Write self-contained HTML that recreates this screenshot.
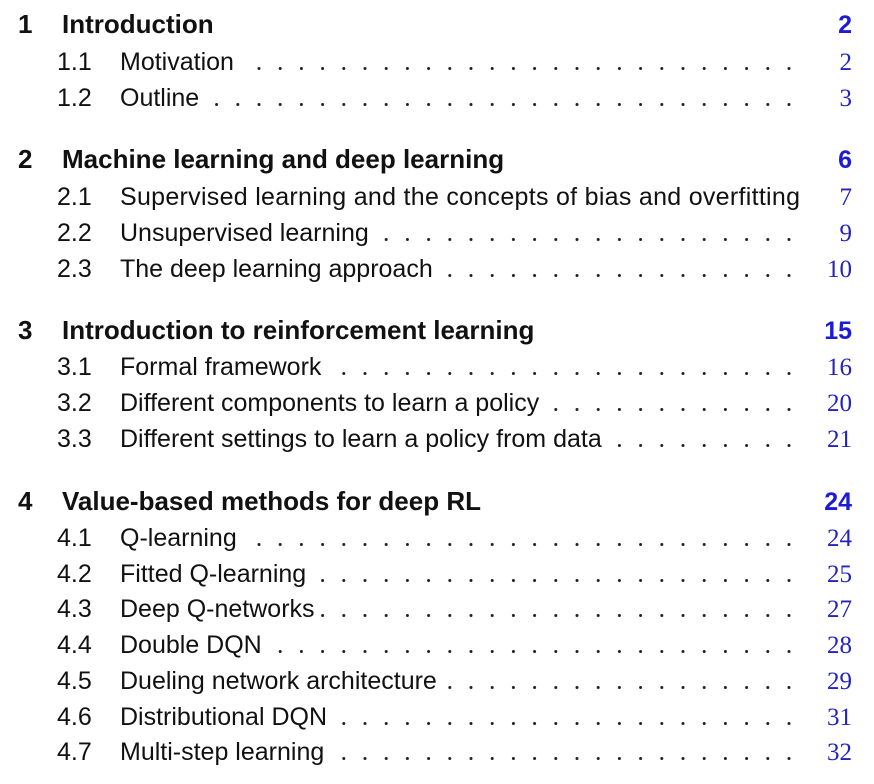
<!DOCTYPE html>
<html><head><meta charset="utf-8"><style>
html,body{margin:0;padding:0;background:#fff;width:874px;height:784px;overflow:hidden}
svg{display:block}
.s{font-family:"Liberation Sans",sans-serif;font-weight:bold;font-size:26px;fill:#111}
.t{font-family:"Liberation Sans",sans-serif;font-size:25px;fill:#111}
.sp{font-family:"Liberation Sans",sans-serif;font-weight:bold;font-size:25px;fill:#1c1cd4}
.tp{font-family:"Liberation Serif",serif;font-size:25px;fill:#2323c0}
</style></head><body>
<svg id="g" width="874" height="784" xmlns="http://www.w3.org/2000/svg"></svg>
<script>
var rows=[
['S','1','Introduction','2',33],
['T','1.1','Motivation','2',70],
['T','1.2','Outline','3',106],
['S','2','Machine learning and deep learning','6',168],
['T','2.1','Supervised learning and the concepts of bias and overfitting','7',205],
['T','2.2','Unsupervised learning','9',241],
['T','2.3','The deep learning approach','10',277],
['S','3','Introduction to reinforcement learning','15',339],
['T','3.1','Formal framework','16',375],
['T','3.2','Different components to learn a policy','20',411],
['T','3.3','Different settings to learn a policy from data','21',447],
['S','4','Value-based methods for deep RL','24',510],
['T','4.1','Q-learning','24',546],
['T','4.2','Fitted Q-learning','25',582],
['T','4.3','Deep Q-networks','27',617],
['T','4.4','Double DQN','28',653],
['T','4.5','Dueling network architecture','29',689],
['T','4.6','Distributional DQN','31',725],
['T','4.7','Multi-step learning','32',760]
];
var g=document.getElementById('g'),NS='http://www.w3.org/2000/svg';
function tx(x,y,c,s,anchor){var e=document.createElementNS(NS,'text');e.setAttribute('x',x);e.setAttribute('y',y);e.setAttribute('class',c);if(anchor)e.setAttribute('text-anchor',anchor);e.textContent=s;g.appendChild(e);return e;}
rows.forEach(function(r){
 var y=r[4];
 if(r[0]=='S'){tx(18,y,'s',r[1]);tx(62,y,'s',r[2]);tx(852,y,'sp',r[3],'end');}
 else{tx(57,y,'t',r[1]);var e=tx(120,y,'t',r[2]);
  if(r[2].length>50)e.setAttribute('textLength','680');
  var end=120+e.getComputedTextLength();if(r[2].length>50)end=800;
  for(var x=789;x>end+8;x-=21.2){var c=document.createElementNS(NS,'circle');c.setAttribute('cx',x.toFixed(1));c.setAttribute('cy',y-1.5);c.setAttribute('r','1.5');c.setAttribute('fill','#222');g.appendChild(c);}
  tx(852,y,'tp',r[3],'end');}
});
</script>
</body></html>
